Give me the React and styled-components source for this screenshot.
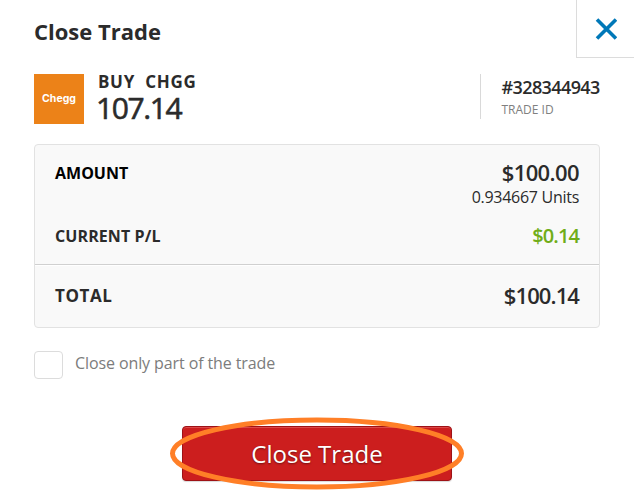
import React from 'react';
import styled, { createGlobalStyle } from 'styled-components';

const GlobalStyle = createGlobalStyle`
  * {
    box-sizing: border-box;
  }

  body {
    margin: 0;
    background: #fff;
    color: #2b2b2b;
    font-family: 'Open Sans', 'Noto Sans', sans-serif;
  }
`;

const Dialog = styled.main`
  display: flex;
  flex-direction: column;
  width: 634px;
  height: 490px;
  overflow: hidden;
  background: #fff;
`;

const TitleBar = styled.header`
  display: flex;
  justify-content: space-between;
  height: 58px;
  padding-left: 34px;
`;

const Title = styled.h1`
  margin: 15px 0 0;
  font-size: 22px;
  font-weight: 700;
  line-height: 32px;
`;

const CloseButton = styled.button`
  display: flex;
  align-items: center;
  justify-content: center;
  width: 58px;
  height: 58px;
  padding: 0;
  border: 0 solid #dcdcdc;
  border-width: 0 0 1px 1px;
  background: #fff;
`;

const Content = styled.div`
  display: flex;
  flex-direction: column;
  padding: 16px 34px 0;
`;

const Instrument = styled.section`
  display: flex;
  height: 50px;
`;

const Logo = styled.div`
  width: 50px;
  height: 50px;
  background: #ec8218;
  color: #fff;
  font-family: Inter, sans-serif;
  font-size: 10.5px;
  font-weight: 700;
  line-height: 49px;
  text-align: center;
`;

const Quote = styled.div`
  display: flex;
  flex: 1;
  flex-direction: column;
  padding-left: 14px;
`;

const Text = styled.span`
  color: ${(props) => props.$color || '#2b2b2b'};
  font-size: ${(props) => props.$size}px;
  font-weight: ${(props) => props.$weight || 400};
  line-height: ${(props) => props.$line}px;
  letter-spacing: ${(props) => props.$spacing || 0}px;
  white-space: pre;
`;

const Price = styled(Text)`
  margin-left: -2px;
  -webkit-text-stroke: 0.6px #2b2b2b;
`;

const TradeId = styled.div`
  display: flex;
  flex-direction: column;
  width: 120px;
  height: 45px;
  padding: 0 0 0 20.5px;
  border-left: 1px solid #d9d9d9;
`;

const Summary = styled.section`
  margin-top: 20px;
  border: 1px solid #e2e2e2;
  border-radius: 4px;
  background: #f9f9f9;
`;

const Row = styled.div`
  display: flex;
  justify-content: space-between;
  height: ${(props) => props.$height}px;
  padding: ${(props) => props.$top}px 20px 0;
  border-top: ${(props) => (props.$divided ? '1px solid #d0d0d0' : '0')};
  box-shadow: ${(props) => (props.$divided ? 'inset 0 1px 0 #fff' : 'none')};
`;

const Values = styled.div`
  display: flex;
  flex-direction: column;
  align-items: flex-end;
`;

const PartialClose = styled.label`
  display: flex;
  height: 29px;
  margin-top: 23px;
`;

const Checkbox = styled.input`
  appearance: none;
  width: 29px;
  height: 28px;
  margin: 0 12px 0 0;
  border: 1px solid #dcdcdc;
  border-radius: 4px;
  background: #fff;
`;

const Actions = styled.footer`
  display: flex;
  position: relative;
  justify-content: center;
  margin-top: 46px;
`;

const SubmitButton = styled.button`
  width: 270px;
  height: 55px;
  padding: 0;
  border: 1px solid #9e1216;
  border-radius: 4px;
  background: #cc1e1e;
  box-shadow: inset 0 1px 0 #dc4848, 0 1px 1px rgba(0, 0, 0, 0.15);
  color: #fff;
  font-family: inherit;
  font-size: 24px;
  line-height: 32px;
  text-shadow: 0 1px 2px rgba(0, 0, 0, 0.45);
`;

// Hand-drawn style ring laid over the button
const Highlight = styled.svg`
  position: absolute;
  top: -9px;
  left: 135px;
  pointer-events: none;
`;

function App() {
  return (
    <>
      <GlobalStyle />
      <Dialog>
        <TitleBar>
          <Title>Close Trade</Title>
          <CloseButton aria-label="Close">
            <svg width="22" height="22" viewBox="0 0 22 22">
              <path d="M2 1.5 21 20.5M21 1.5 2 20.5" stroke="#0078b8" strokeWidth="3.6" />
            </svg>
          </CloseButton>
        </TitleBar>
        <Content>
          <Instrument>
            <Logo>Chegg</Logo>
            <Quote>
              <Text $size={17} $weight={700} $line={16} $spacing={0.7}>{'BUY  CHGG'}</Text>
              <Price $size={30} $line={35} $spacing={-1.4}>107.14</Price>
            </Quote>
            <TradeId>
              <Text $size={18} $weight={600} $line={26} $spacing={-0.6}>#328344943</Text>
              <Text $size={12} $line={20} $color="#808080">TRADE ID</Text>
            </TradeId>
          </Instrument>
          <Summary>
            <Row $height={64} $top={14}>
              <Text $size={16} $weight={700} $line={28} $color="#000">AMOUNT</Text>
              <Values>
                <Text $size={22} $weight={600} $line={26} $spacing={-0.6}>$100.00</Text>
                <Text $size={16} $line={24} $spacing={-0.28}>0.934667 Units</Text>
              </Values>
            </Row>
            <Row $height={55} $top={13}>
              <Text $size={16} $weight={700} $line={28} $spacing={0.1}>CURRENT P/L</Text>
              <Text $size={20} $weight={600} $line={28} $color="#70ad18" $spacing={-0.9}>$0.14</Text>
            </Row>
            <Row $height={63} $top={16} $divided>
              <Text $size={17} $weight={700} $line={29} $spacing={0.6}>TOTAL</Text>
              <Text $size={22} $weight={600} $line={28} $spacing={-0.9}>$100.14</Text>
            </Row>
          </Summary>
          <PartialClose>
            <Checkbox type="checkbox" />
            <Text $size={16} $line={24} $color="#7c7c7c" $spacing={-0.1}>Close only part of the trade</Text>
          </PartialClose>
          <Actions>
            <SubmitButton>Close Trade</SubmitButton>
            <Highlight width="296" height="74" viewBox="0 0 296 74">
              <ellipse cx="148" cy="36.5" rx="144.5" ry="33.5" fill="none" stroke="#ff7f27" strokeWidth="5" />
            </Highlight>
          </Actions>
        </Content>
      </Dialog>
    </>
  );
}

export default App;
